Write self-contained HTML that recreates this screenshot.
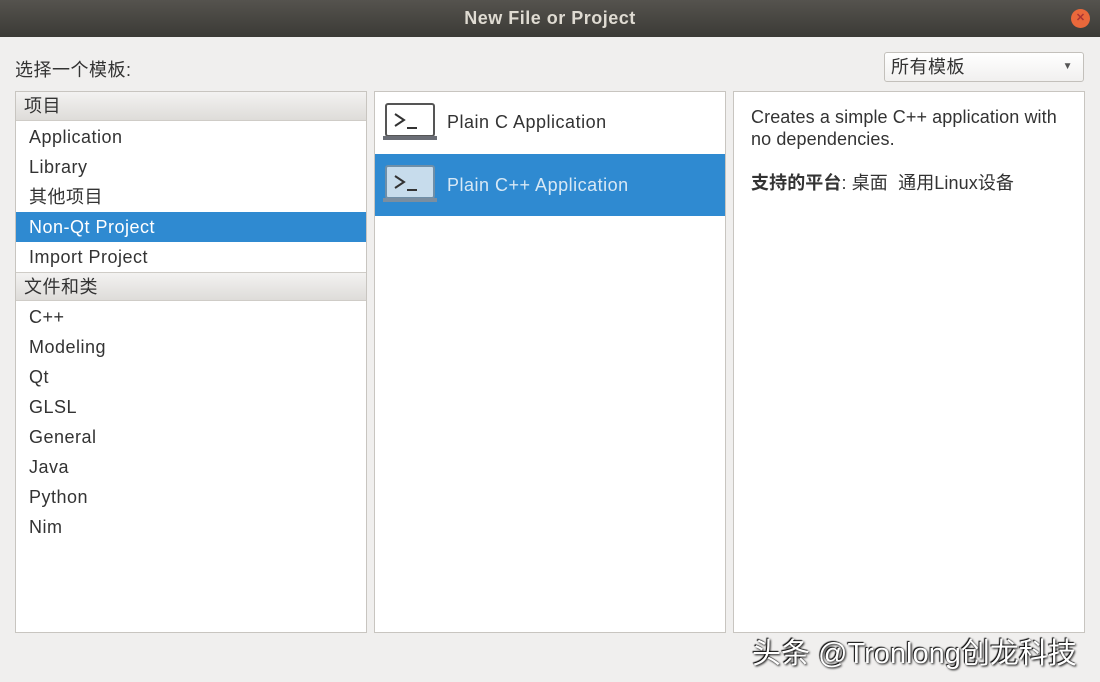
<!DOCTYPE html>
<html><head><meta charset="utf-8"><style>
*{margin:0;padding:0;box-sizing:border-box}
body{width:1100px;height:682px;overflow:hidden;background:#f0efee;font-family:"Liberation Sans","Noto Sans CJK SC",sans-serif;font-size:18px;letter-spacing:0.5px;color:#333;position:relative}
.title{position:absolute;left:0;top:0;width:1100px;height:37px;background:linear-gradient(#55534e,#3b3a36);color:#dfdbd2;font-weight:bold;text-align:center;line-height:37px;font-size:18px}
.close{position:absolute;right:10px;top:9px;width:19px;height:19px;border-radius:50%;background:#e9683b;color:#a33;font-size:11px;line-height:19px;text-align:center;letter-spacing:0}
.abs{position:absolute}
.panel{position:absolute;background:#fff;border:1px solid #c8c5c0;top:91px;height:542px}
.hdr{position:absolute;left:0;width:100%;height:29px;background:linear-gradient(#f3f2f1,#dedcd9);border-bottom:1px solid #cfccc7;padding-left:8px;line-height:29px}
.it{position:absolute;left:0;width:100%;height:30px;line-height:30px;padding-left:13px}
.sel{background:#2f8ad1;color:#fff}
.ico{position:absolute;left:8px;width:54px;height:40px}
</style></head><body>
<div class="title">New File or Project<div class="close">✕</div></div>
<div class="abs" style="left:15px;top:56px">选择一个模板:</div>
<div class="abs" style="left:884px;top:52px;width:200px;height:30px;border:1px solid #c3c0bb;border-radius:3px;background:linear-gradient(#fff,#f1f0ef);padding-left:6px;line-height:28px">所有模板<span style="position:absolute;right:10px;font-size:10px;color:#555">▼</span></div>
<div class="panel" style="left:15px;width:352px">
<div class="hdr" style="top:0">项目</div>
<div class="it" style="top:30px">Application</div>
<div class="it" style="top:60px">Library</div>
<div class="it" style="top:90px">其他项目</div>
<div class="it sel" style="top:120px">Non-Qt Project</div>
<div class="it" style="top:150px">Import Project</div>
<div class="hdr" style="top:180px;border-top:1px solid #cfccc7">文件和类</div>
<div class="it" style="top:210px">C++</div>
<div class="it" style="top:240px">Modeling</div>
<div class="it" style="top:270px">Qt</div>
<div class="it" style="top:300px">GLSL</div>
<div class="it" style="top:330px">General</div>
<div class="it" style="top:360px">Java</div>
<div class="it" style="top:390px">Python</div>
<div class="it" style="top:420px">Nim</div>
</div>
<div class="panel" style="left:374px;width:352px">
<div class="abs" style="left:0;top:0;width:100%;height:61px"><svg class="ico" style="top:10px" viewBox="0 0 54 40"><rect x="3" y="2" width="48" height="32" rx="2" fill="#fff" stroke="#555" stroke-width="2"/><rect x="0" y="34" width="54" height="4" fill="#6a6d75"/><path d="M12 12l9 6-9 6M24 26h10" fill="none" stroke="#333" stroke-width="2"/></svg><span class="abs" style="left:72px;top:20px">Plain C Application</span></div>
<div class="abs sel" style="left:0;top:62px;width:100%;height:62px"><svg class="ico" style="top:10px" viewBox="0 0 54 40"><rect x="3" y="2" width="48" height="32" rx="2" fill="#c7dcec" stroke="#6f8fa8" stroke-width="2"/><rect x="0" y="34" width="54" height="4" fill="#7b8ea0"/><path d="M12 12l9 6-9 6M24 26h10" fill="none" stroke="#333" stroke-width="2"/></svg><span class="abs" style="left:72px;top:21px;color:#d7e8f5">Plain C++ Application</span></div>
</div>
<div class="panel" style="left:733px;width:352px;padding:14px 8px 15px 17px;line-height:22px;letter-spacing:0.1px">Creates a simple C++ application with no dependencies.<br><br><b>支持的平台</b>: 桌面&nbsp; 通用Linux设备</div>
<div class="abs" style="left:752px;top:630px;font-size:29px;letter-spacing:0;color:#fff;text-shadow:1px 1px 2px #000,-1px -1px 1px #000">头条 @Tronlong创龙科技</div>
</body></html>
